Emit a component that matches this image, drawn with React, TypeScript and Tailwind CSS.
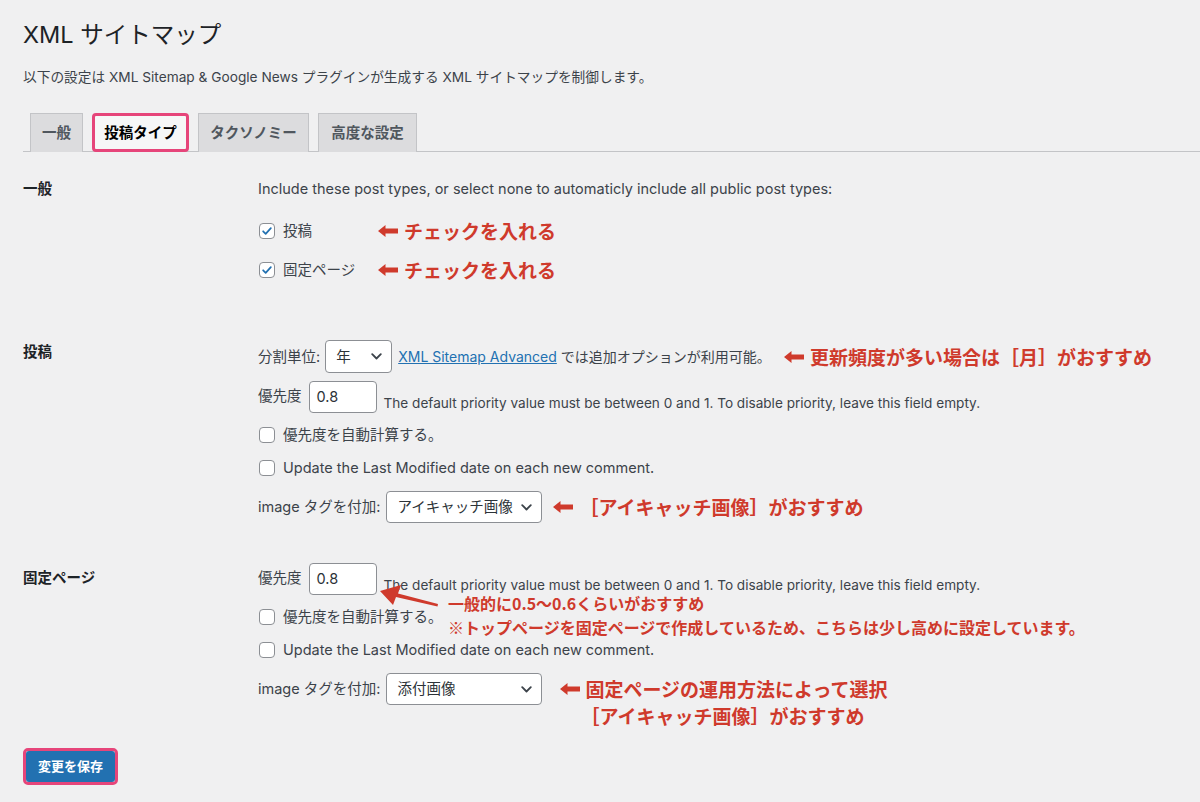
import type { ReactNode } from 'react';

const RED = '#cf3a2c';

function LeftArrow() {
  return (
    <svg width="20" height="12" viewBox="0 0 20 12" className="shrink-0">
      <polygon points="0,6 7.5,0 7.5,3.5 20,3.5 20,8.5 7.5,8.5 7.5,12" fill={RED} />
    </svg>
  );
}

function Note({ children }: { children: ReactNode }) {
  return (
    <div className="flex items-center font-['Noto_Sans_CJK_JP',sans-serif] text-[19px] font-bold leading-6 text-[#cf3a2c]">
      <LeftArrow />
      <span className="ml-[6px] whitespace-nowrap">{children}</span>
    </div>
  );
}

function Checkbox({ checked }: { checked?: boolean }) {
  return (
    <span className="flex h-4 w-4 shrink-0 items-center justify-center rounded-[4px] border border-[#8c8f94] bg-white">
      {checked && (
        <svg viewBox="0 0 16 16" className="h-[14px] w-[14px]">
          <path d="M3.6 8.3l2.9 2.9 5.9-6.4" fill="none" stroke="#2271b1" strokeWidth={2} strokeLinecap="round" strokeLinejoin="round" />
        </svg>
      )}
    </span>
  );
}

function Chevron() {
  return (
    <svg width="11" height="7" viewBox="0 0 11 7" className="shrink-0">
      <path d="M1.2 1.2l4.3 4.3 4.3-4.3" fill="none" stroke="#3c434a" strokeWidth={1.8} strokeLinecap="round" strokeLinejoin="round" />
    </svg>
  );
}

function Select({ value, className }: { value: string; className: string }) {
  return (
    <div className={`flex items-center justify-between rounded-[4px] border border-[#8c8f94] bg-white pl-[10px] pr-[9px] text-[14.5px] text-[#2c3338] ${className}`}>
      <span className="whitespace-nowrap">{value}</span>
      <Chevron />
    </div>
  );
}

function CheckRow({ label, checked, className }: { label: string; checked?: boolean; className: string }) {
  return (
    <div className={`flex h-6 items-center ${className}`}>
      <span className="ml-px"><Checkbox checked={checked} /></span>
      <span className="ml-[8px] whitespace-nowrap">{label}</span>
    </div>
  );
}

function PriorityRow() {
  return (
    <div className="flex h-8 items-start">
      <span className="mt-[3px] leading-6">優先度</span>
      <div className="ml-[7px] flex h-8 w-[68px] items-center rounded-[4px] border border-[#8c8f94] bg-white pl-[7px] text-[14.5px] text-[#2c3338]">0.8</div>
      <span className="ml-[7px] mt-[12px] whitespace-nowrap text-[13.6px] leading-5">
        The default priority value must be between 0 and 1. To disable priority, leave this field empty.
      </span>
    </div>
  );
}

const tabs = [
  { name: '一般', width: 'w-[53px]' },
  { name: '投稿タイプ', width: 'w-[97px]', active: true },
  { name: 'タクソノミー', width: 'w-[111px]' },
  { name: '高度な設定', width: 'w-[99px]' },
];

export default function App() {
  return (
    <div className="min-h-screen w-full bg-[#f0f0f1] pl-[23px] font-['Inter','Noto_Sans_CJK_JP',sans-serif] text-[14.5px] text-[#3c434a]">
      {/* Header */}
      <h1 className="pt-[20px] text-[23.5px] leading-[30px] text-[#1d2327]">XML サイトマップ</h1>
      <p className="mt-[17px] text-[13.7px] leading-5">
        以下の設定は XML Sitemap &amp; Google News プラグインが生成する XML サイトマップを制御します。
      </p>

      {/* Tabs */}
      <div className="mt-[26px] flex items-end gap-[9px] border-b border-[#c3c4c7] pl-[7px]">
        {tabs.map((tab) =>
          tab.active ? (
            <div
              key={tab.name}
              className={`-mb-px flex h-[39px] items-center justify-center rounded-[4px] border-[3px] border-[#e6457a] bg-[#f6f7f7] text-[14.5px] font-bold text-black ${tab.width}`}
            >
              {tab.name}
            </div>
          ) : (
            <div
              key={tab.name}
              className={`-mb-px flex h-[39px] items-center justify-center border border-b-0 border-[#c3c4c7] bg-[#dcdcde] text-[14.5px] font-bold text-[#50575e] ${tab.width}`}
            >
              {tab.name}
            </div>
          ),
        )}
      </div>

      {/* 一般 */}
      <div className="mt-[25px] flex">
        <div className="w-[235px] shrink-0 font-bold leading-6 text-[#1d2327]">一般</div>
        <div className="flex flex-col">
          <div className="flex h-6 items-center whitespace-nowrap">
            Include these post types, or select none to automaticly include all public post types:
          </div>
          <div className="mt-[18px] flex items-center">
            <CheckRow label="投稿" checked className="w-[120px]" />
            <Note>チェックを入れる</Note>
          </div>
          <div className="mt-[15px] flex items-center">
            <CheckRow label="固定ページ" checked className="w-[120px]" />
            <Note>チェックを入れる</Note>
          </div>
        </div>
      </div>

      {/* 投稿 */}
      <div className="mt-[58px] flex">
        <div className="w-[235px] shrink-0 font-bold leading-6 text-[#1d2327]">投稿</div>
        <div className="flex flex-col">
          <div className="flex h-[33px] items-center">
            <div className="flex w-[526px] items-center text-[14px]">
              <span className="text-[14.5px]">分割単位:</span>
              <Select value="年" className="ml-[5px] h-[33px] w-[67px]" />
              <span className="ml-[6px] whitespace-nowrap text-[#2271b1] underline">XML Sitemap Advanced</span>
              <span className="ml-[4px] whitespace-nowrap">では追加オプションが利用可能。</span>
            </div>
            <Note>更新頻度が多い場合は［月］がおすすめ</Note>
          </div>
          <div className="mt-[8px]">
            <PriorityRow />
          </div>
          <CheckRow label="優先度を自動計算する。" className="mt-[10px]" />
          <CheckRow label="Update the Last Modified date on each new comment." className="mt-[9px]" />
          <div className="mt-[11px] flex h-8 items-center">
            <span className="whitespace-nowrap">image タグを付加:</span>
            <Select value="アイキャッチ画像" className="ml-[6px] h-8 w-[156px]" />
            <div className="ml-[11px]">
              <Note>［アイキャッチ画像］がおすすめ</Note>
            </div>
          </div>
        </div>
      </div>

      {/* 固定ページ */}
      <div className="mt-[40px] flex">
        <div className="w-[235px] shrink-0 pt-[3px] font-bold leading-6 text-[#1d2327]">固定ページ</div>
        <div className="relative flex flex-col">
          <PriorityRow />
          <CheckRow label="優先度を自動計算する。" className="mt-[10px]" />
          <CheckRow label="Update the Last Modified date on each new comment." className="mt-[9px]" />
          <div className="mt-[11px] flex h-8 items-start">
            <span className="mt-[4px] whitespace-nowrap leading-6">image タグを付加:</span>
            <Select value="添付画像" className="ml-[6px] h-8 w-[156px]" />
            <div className="ml-[18px] mt-[2px] flex items-start font-['Noto_Sans_CJK_JP',sans-serif] text-[19px] font-bold leading-[27px] text-[#cf3a2c]">
              <div className="flex h-[27px] items-center">
                <LeftArrow />
              </div>
              <div className="ml-[5px] flex flex-col whitespace-nowrap">
                <span>固定ページの運用方法によって選択</span>
                <span className="-ml-[5px]">［アイキャッチ画像］がおすすめ</span>
              </div>
            </div>
          </div>

          {/* Annotation over the priority field */}
          <svg width="66" height="28" viewBox="0 0 66 28" className="absolute left-[118px] top-[19px]">
            <polygon points="4,9 25,3 22,11.5 62,22 61.5,24.5 20,15 17,23" fill={RED} />
          </svg>
          <div className="absolute left-[190px] top-[28px] whitespace-nowrap font-['Noto_Sans_CJK_JP',sans-serif] text-[16px] font-bold leading-6 text-[#cf3a2c]">
            一般的に0.5〜0.6くらいがおすすめ
          </div>
          <div className="absolute left-[190px] top-[52px] whitespace-nowrap font-['Noto_Sans_CJK_JP',sans-serif] text-[16px] font-bold leading-6 text-[#cf3a2c]">
            ※トップページを固定ページで作成しているため、こちらは少し高めに設定しています。
          </div>
        </div>
      </div>

      {/* Save */}
      <div className="mt-[43px] inline-flex rounded-[5px] border-[3px] border-[#e6457a]">
        <button className="flex h-[31px] w-[89px] items-center justify-center rounded-[3px] bg-[#2271b1] text-[13px] font-bold text-white">
          変更を保存
        </button>
      </div>
    </div>
  );
}
